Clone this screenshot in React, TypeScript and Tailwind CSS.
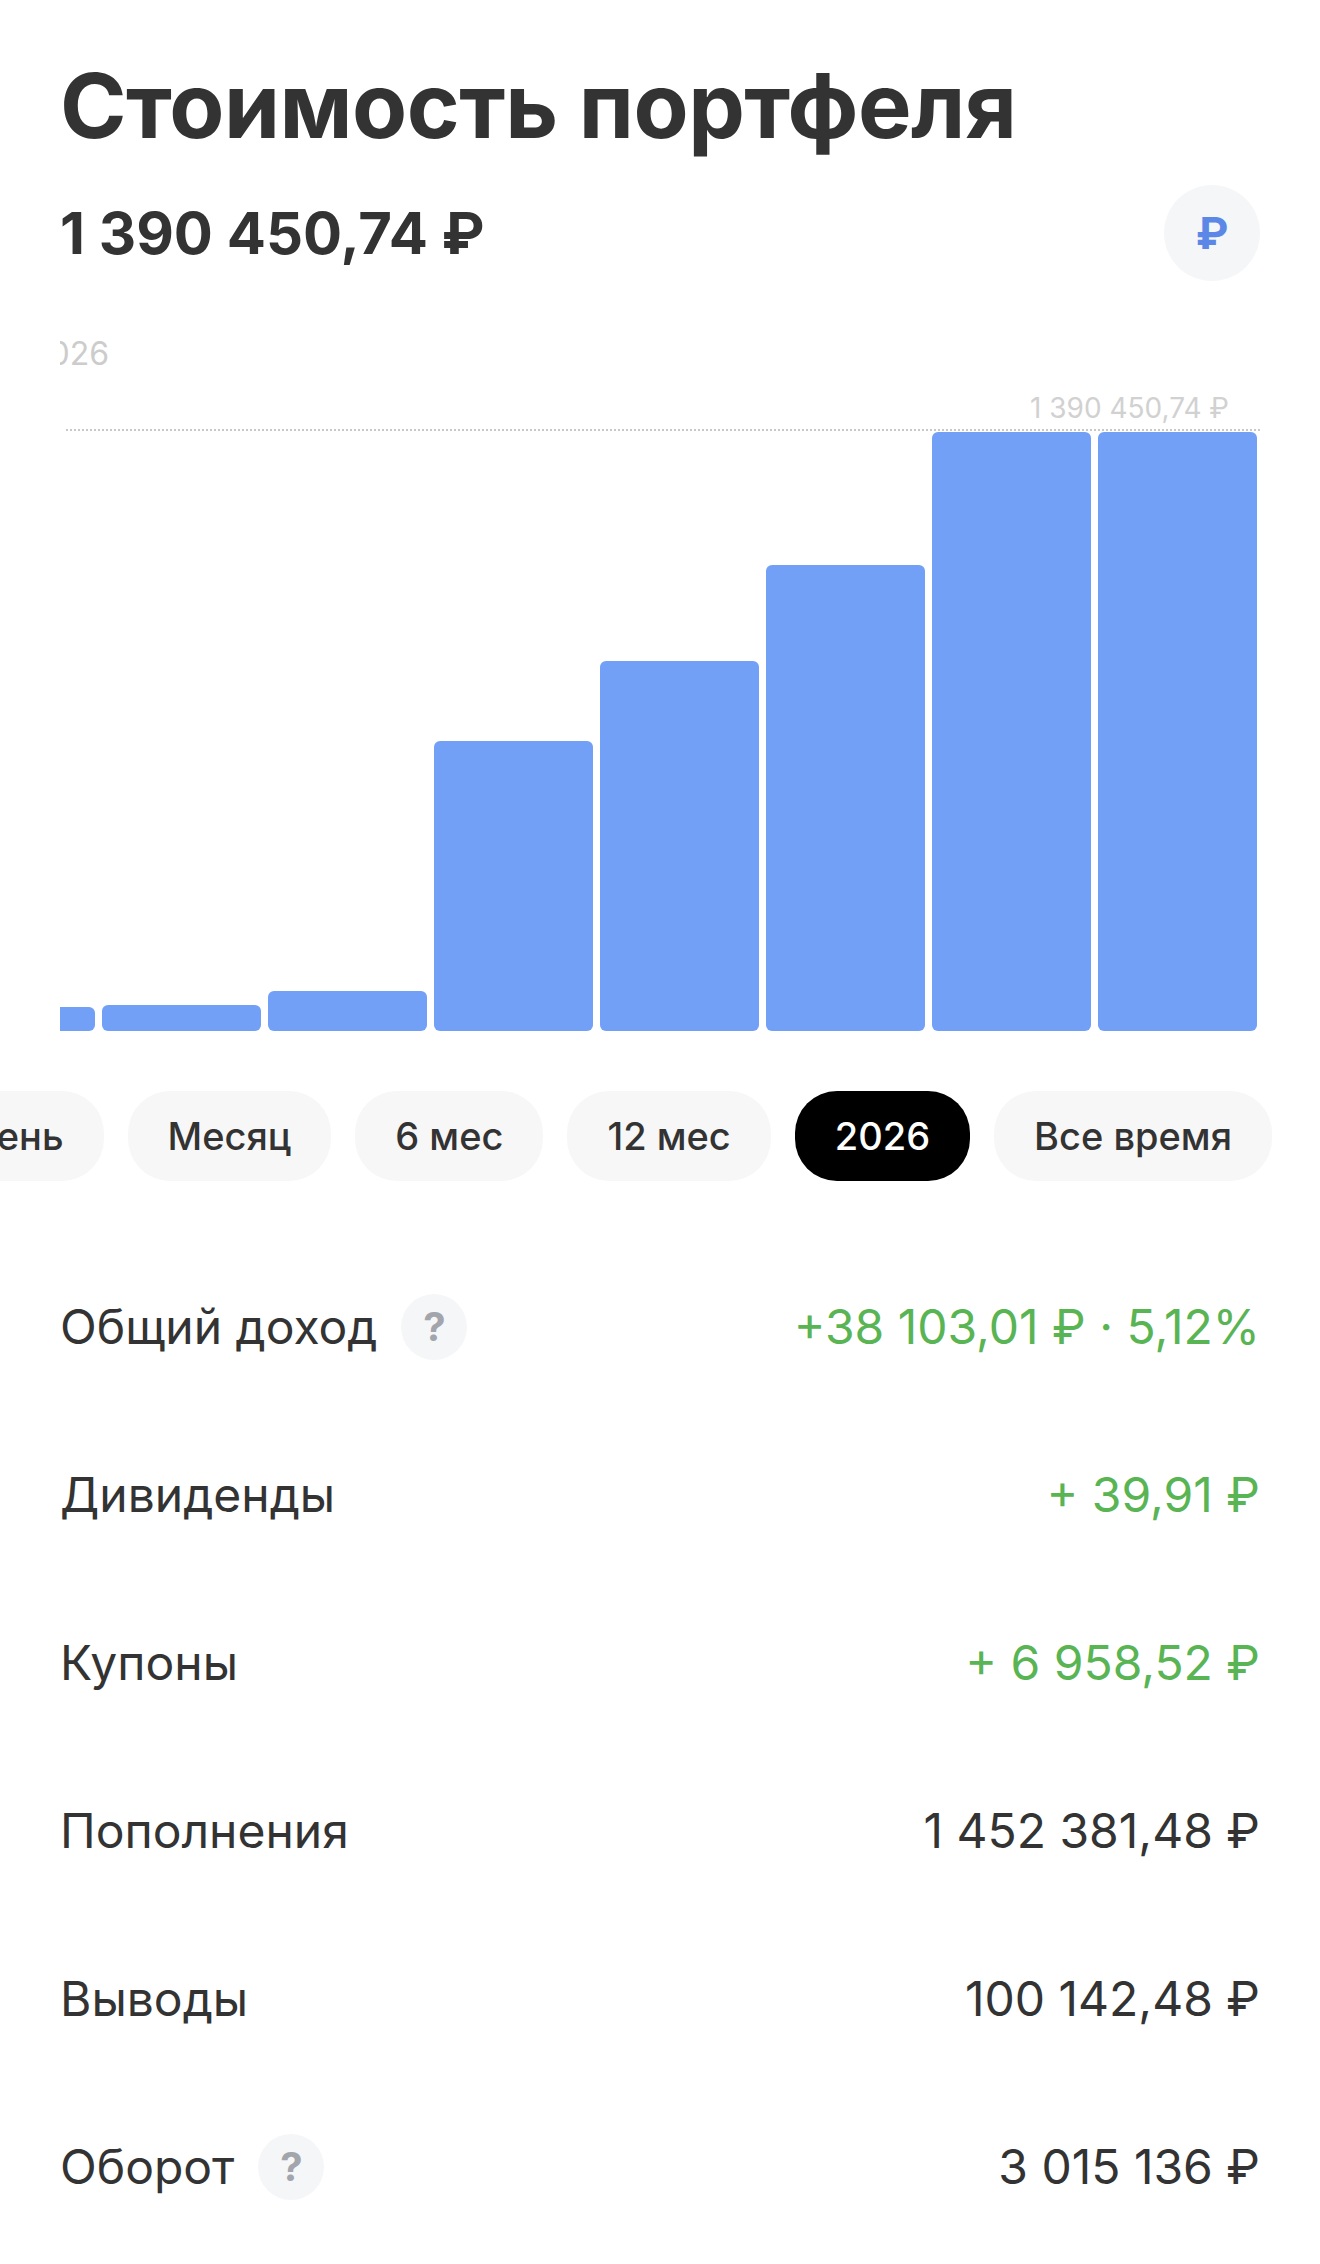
const bars = [24, 26, 40, 290, 370, 466, 599, 599];

const periods = [
	{ label: 'День', active: false },
	{ label: 'Месяц', active: false },
	{ label: '6 мес', active: false },
	{ label: '12 мес', active: false },
	{ label: '2026', active: true },
	{ label: 'Все время', active: false },
];

const rows = [
	{ label: 'Общий доход', value: '+38 103,01 ₽ · 5,12%', green: true, help: true },
	{ label: 'Дивиденды', value: '+ 39,91 ₽', green: true, help: false },
	{ label: 'Купоны', value: '+ 6 958,52 ₽', green: true, help: false },
	{ label: 'Пополнения', value: '1 452 381,48 ₽', green: false, help: false },
	{ label: 'Выводы', value: '100 142,48 ₽', green: false, help: false },
	{ label: 'Оборот', value: '3 015 136 ₽', green: false, help: true },
];

export default function App() {
	return (
		<div className="w-[1320px] h-[2264px] overflow-hidden bg-white text-[#333333] font-['Inter',sans-serif]">
			<div className="px-[60px] pt-[52px]">
				<h1 className="text-[90px] leading-[108px] font-bold tracking-[-0.5px]">Стоимость портфеля</h1>
				<div className="mt-[25px] flex items-center justify-between">
					<div className="text-[58px] leading-[96px] font-bold">1 390 450,74 ₽</div>
					<div className="w-[96px] h-[96px] rounded-full bg-[#f5f6f8] flex items-center justify-center text-[44px] font-bold text-[#5b87e6]">₽</div>
				</div>

				{/* Chart */}
				<div className="relative mt-[39px] h-[711px] overflow-hidden flex items-end justify-end gap-[6.5px] pr-[3px]">
					<div className="absolute right-[-100px] top-[14px] w-[1300px] text-left text-[32px] leading-[40px] text-[#cccccc] left-[-30px]">2026</div>
					<div className="absolute right-[31px] top-[70px] text-[28px] leading-[36px] text-[#d1d1d1]">1 390 450,74 ₽</div>
					<div className="absolute left-[6px] right-0 top-[109px] border-t-2 border-dotted border-[#c8c8c8] z-10"></div>
					{bars.map((h, i) => (
						<div key={i} className="w-[159.5px] shrink-0 rounded-[6px] bg-[#72a0f7]" style={{ height: h }}></div>
					))}
				</div>
			</div>

			{/* Period pills */}
			<div className="mt-[60px] flex justify-end gap-[24px] pr-[48px] overflow-hidden">
				{periods.map((p) => (
					<div
						key={p.label}
						className={`h-[90px] px-[40px] shrink-0 rounded-[42px] flex items-center text-[38px] font-medium ${
							p.active ? 'bg-black text-white' : 'bg-[#f7f7f7] text-[#333333]'
						}`}
					>
						{p.label}
					</div>
				))}
			</div>

			{/* Stats */}
			<div className="mt-[62px] px-[60px]">
				{rows.map((r) => (
					<div key={r.label} className="h-[168px] flex items-center justify-between text-[48px]">
						<div className="flex items-center gap-[24px]">
							<span>{r.label}</span>
							{r.help && (
								<span className="w-[66px] h-[66px] rounded-full bg-[#f5f6f8] flex items-center justify-center text-[40px] font-bold text-[#a3a5ad]">?</span>
							)}
						</div>
						<span className={r.green ? 'text-[#59b454]' : ''}>{r.value}</span>
					</div>
				))}
			</div>
		</div>
	);
}
